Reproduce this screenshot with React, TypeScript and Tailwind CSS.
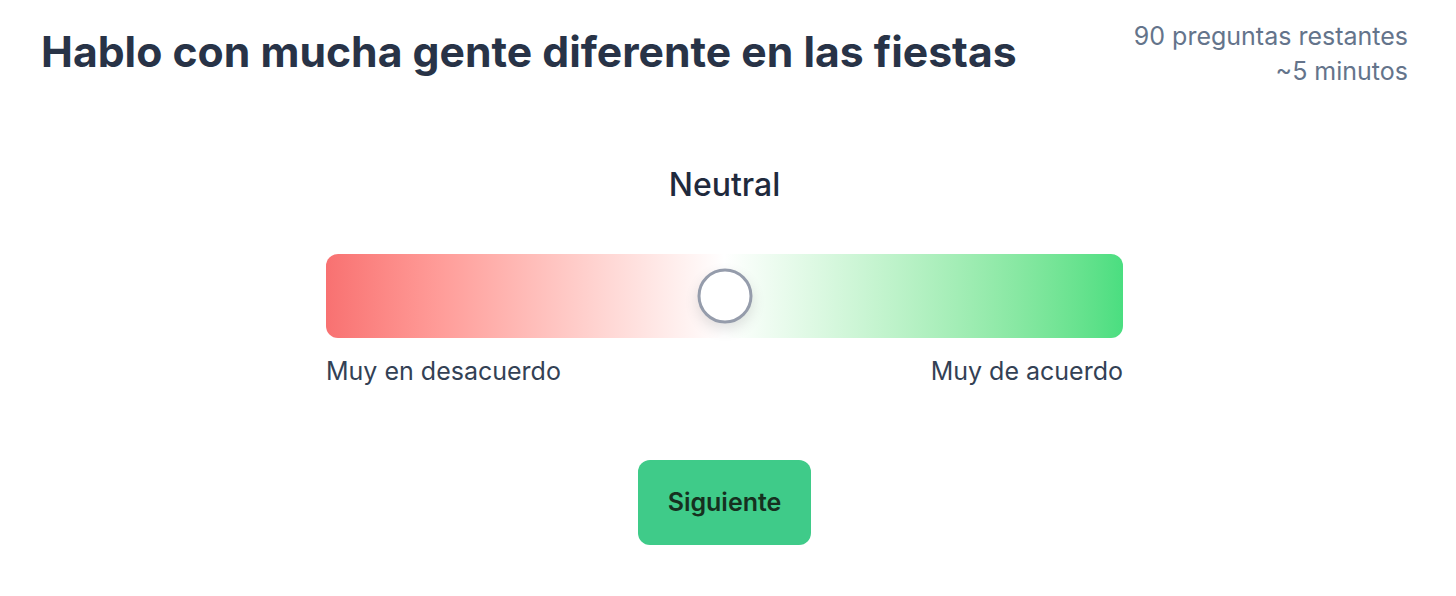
export default function App() {
  return (
    <div className="min-h-screen bg-white font-['Inter',sans-serif]">
      <div className="pl-[41px] pr-[48px] pt-[24px]">
        <div className="flex items-start justify-between">
          <h1 className="text-[42.7px] leading-[56px] font-bold text-[#283347]">
            Hablo con mucha gente diferente en las fiestas
          </h1>
          <div className="-mt-[5px] text-right text-[25px] leading-[35px] text-[#64748b]">
            <p>90 preguntas restantes</p>
            <p>~5 minutos</p>
          </div>
        </div>

        <div className="flex flex-col items-center">
          <p className="mt-[76px] text-[32px] leading-[40px] font-medium text-[#1f2a3d]">Neutral</p>

          <div className="mt-[49px] w-[797px]">
            <div className="relative h-[84px] rounded-[12px] bg-gradient-to-r from-[#f87171] via-white to-[#4ade80]">
              <div className="absolute left-1/2 top-1/2 -translate-x-1/2 -translate-y-1/2 w-[55px] h-[55px] rounded-full bg-white border-[3px] border-[#959cab] shadow-[0_6px_14px_rgba(0,0,0,0.12)]" />
            </div>
            <div className="mt-[18px] flex justify-between text-[25px] leading-[30px] text-[#334155]">
              <span>Muy en desacuerdo</span>
              <span>Muy de acuerdo</span>
            </div>
          </div>

          <button className="mt-[74px] w-[173px] h-[85px] rounded-[12px] bg-[#3fcb89] text-[25px] font-semibold text-[#16301f]">
            Siguiente
          </button>
        </div>
      </div>
    </div>
  );
}
